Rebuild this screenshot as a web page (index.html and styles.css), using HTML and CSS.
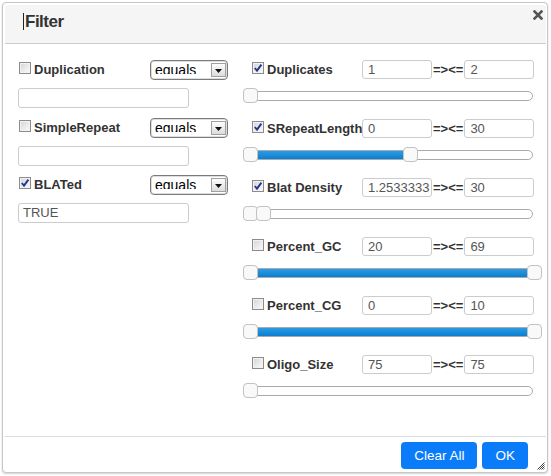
FILE: index.html
```html
<!DOCTYPE html>
<html>
<head>
<meta charset="utf-8">
<link rel="stylesheet" href="styles.css">
</head>
<body>
<div class="dialog">
  <div class="titlebar">
    <span class="caret"></span><span class="title">Filter</span>
    <span class="close"><svg width="10" height="10" viewBox="0 0 10 10"><path d="M1.5 1.5 L8.5 8.5 M8.5 1.5 L1.5 8.5" stroke="#555" stroke-width="2.6" stroke-linecap="square"/></svg></span>
  </div>
  <div class="content">
    <div class="col-left">
      <div class="lgroup">
        <div class="row">
          <span class="cb"></span><span class="lbl">Duplication</span>
          <span class="select"><span class="sel-text">equals</span><span class="sel-btn"><svg width="7" height="4" viewBox="0 0 7 4"><path d="M0 0 H7 L3.5 4 Z" fill="#111"/></svg></span></span>
        </div>
        <div class="textbox"></div>
      </div>
      <div class="lgroup">
        <div class="row">
          <span class="cb"></span><span class="lbl">SimpleRepeat</span>
          <span class="select"><span class="sel-text">equals</span><span class="sel-btn"><svg width="7" height="4" viewBox="0 0 7 4"><path d="M0 0 H7 L3.5 4 Z" fill="#111"/></svg></span></span>
        </div>
        <div class="textbox"></div>
      </div>
      <div class="lgroup">
        <div class="row">
          <span class="cb checked"><svg width="10" height="10" viewBox="0 0 10 10"><path d="M1.8 5 L4 7.6 L8.4 1.6" stroke="#23368f" stroke-width="1.9" fill="none"/></svg></span><span class="lbl">BLATed</span>
          <span class="select"><span class="sel-text">equals</span><span class="sel-btn"><svg width="7" height="4" viewBox="0 0 7 4"><path d="M0 0 H7 L3.5 4 Z" fill="#111"/></svg></span></span>
        </div>
        <div class="textbox">TRUE</div>
      </div>
    </div>
    <div class="col-right">
      <div class="rgroup">
        <div class="row">
          <span class="cb checked"><svg width="10" height="10" viewBox="0 0 10 10"><path d="M1.8 5 L4 7.6 L8.4 1.6" stroke="#23368f" stroke-width="1.9" fill="none"/></svg></span><span class="rlbl">Duplicates</span>
          <span class="num">1</span><span class="op">=&gt;&lt;=</span><span class="num">2</span>
        </div>
        <div class="slider"><span class="handle" style="left:-1px"></span></div>
      </div>
      <div class="rgroup">
        <div class="row">
          <span class="cb checked"><svg width="10" height="10" viewBox="0 0 10 10"><path d="M1.8 5 L4 7.6 L8.4 1.6" stroke="#23368f" stroke-width="1.9" fill="none"/></svg></span><span class="rlbl">SRepeatLength</span>
          <span class="num">0</span><span class="op">=&gt;&lt;=</span><span class="num">30</span>
        </div>
        <div class="slider"><span class="range" style="left:14px;width:145px"></span><span class="handle" style="left:-1px"></span><span class="handle" style="left:159px"></span></div>
      </div>
      <div class="rgroup">
        <div class="row">
          <span class="cb checked"><svg width="10" height="10" viewBox="0 0 10 10"><path d="M1.8 5 L4 7.6 L8.4 1.6" stroke="#23368f" stroke-width="1.9" fill="none"/></svg></span><span class="rlbl">Blat Density</span>
          <span class="num">1.2533333</span><span class="op">=&gt;&lt;=</span><span class="num">30</span>
        </div>
        <div class="slider"><span class="handle" style="left:-1px"></span><span class="handle" style="left:12px"></span></div>
      </div>
      <div class="rgroup">
        <div class="row">
          <span class="cb"></span><span class="rlbl">Percent_GC</span>
          <span class="num">20</span><span class="op">=&gt;&lt;=</span><span class="num">69</span>
        </div>
        <div class="slider"><span class="range" style="left:14px;width:269px"></span><span class="handle" style="left:-1px"></span><span class="handle" style="left:283px"></span></div>
      </div>
      <div class="rgroup">
        <div class="row">
          <span class="cb"></span><span class="rlbl">Percent_CG</span>
          <span class="num">0</span><span class="op">=&gt;&lt;=</span><span class="num">10</span>
        </div>
        <div class="slider"><span class="range" style="left:14px;width:269px"></span><span class="handle" style="left:-1px"></span><span class="handle" style="left:283px"></span></div>
      </div>
      <div class="rgroup">
        <div class="row">
          <span class="cb"></span><span class="rlbl">Oligo_Size</span>
          <span class="num">75</span><span class="op">=&gt;&lt;=</span><span class="num">75</span>
        </div>
        <div class="slider"><span class="handle" style="left:-1px"></span></div>
      </div>
    </div>
  </div>
  <div class="footer">
    <button class="btn">Clear All</button>
    <button class="btn">OK</button>
  </div>
  <span class="grip"><svg width="8" height="8" viewBox="0 0 8 8"><path d="M7.5 0.5 L0.5 7.5 M7.5 2.5 L2.5 7.5 M7.5 4.5 L4.5 7.5 M7.5 6.5 L6.5 7.5" stroke="#444" stroke-width="1"/></svg></span>
</div>
</body>
</html>
```
FILE: styles.css
```css
* { box-sizing: border-box; }
html, body { margin: 0; padding: 0; background: #fff; }
body {
  font-family: "Liberation Sans", Arial, sans-serif;
  width: 551px;
  height: 476px;
  overflow: hidden;
  color: #333;
}
.dialog {
  position: relative;
  margin: 2px 0 0 2px;
  width: 546px;
  height: 471px;
  border: 1px solid #c6c6c6;
  border-radius: 4px;
  padding: 2px 1px 2px 2px;
  display: flex;
  flex-direction: column;
  background: #fff;
  box-shadow: 0 1px 2px rgba(0,0,0,0.18);
}
.titlebar {
  height: 39px;
  flex: none;
  background: #f5f5f5;
  border-bottom: 1px solid #cccccc;
  border-radius: 3px 3px 0 0;
  display: flex;
  align-items: flex-start;
  padding-left: 18px;
}
.caret {
  width: 1px;
  height: 17px;
  background: #222;
  margin-top: 8px;
  margin-right: 1px;
}
.title {
  font-size: 17px;
  font-weight: bold;
  line-height: 20px;
  margin-top: 7px;
  letter-spacing: -0.5px;
  color: #333;
}
.close {
  margin-left: auto;
  margin-top: 5px;
  margin-right: 3px;
  width: 10px;
  height: 10px;
  display: flex;
}
.content {
  flex: none;
  height: 392px;
  display: flex;
  padding: 16px 0 0 13px;
}
.col-left {
  width: 210px;
  margin-right: 15px;
}
.col-right {
  width: 291px;
}
.row {
  display: flex;
  align-items: flex-start;
  height: 19px;
}
.lgroup { margin-bottom: 9.5px; }
.lgroup .cb { margin-left: 1px; }
.rgroup .cb { margin-left: 9px; }
.cb {
  flex: none;
  width: 12px;
  height: 12px;
  margin-top: 2px;
  margin-right: 3px;
  border: 1px solid #8c8c8c;
  background: linear-gradient(135deg, #d2d2d2 0%, #e9e9e9 50%, #fafafa 100%);
  box-shadow: inset 0 0 0 1px #f2f2f2;
  display: flex;
  align-items: center;
  justify-content: center;
}
.lbl, .rlbl {
  font-size: 13px;
  font-weight: bold;
  line-height: 19px;
  white-space: nowrap;
  color: #333;
}
.rlbl { width: 95px; flex: none; }
.select {
  margin-left: auto;
  width: 78px;
  height: 20px;
  border: 1px solid #7b7b7b;
  border-radius: 4px;
  box-shadow: inset 0 0 0 1px #dedede;
  background: #fff;
  display: flex;
  align-items: flex-start;
  padding: 0 1px 0 4px;
}
.sel-text {
  flex: 1;
  height: 12px;
  margin-top: 1px;
  overflow: hidden;
  font-size: 14px;
  line-height: 17px;
  color: #000;
}
.sel-btn {
  width: 15px;
  height: 14px;
  margin-top: 2px;
  border: 1px solid #a0a0a0;
  background: linear-gradient(#fdfdfd, #dcdcdc);
  display: flex;
  align-items: center;
  justify-content: center;
  padding-top: 2px;
}
.textbox {
  margin-top: 9px;
  width: 171px;
  height: 20px;
  border: 1px solid #cccccc;
  border-radius: 3px;
  font-size: 13px;
  line-height: 18px;
  padding-left: 4px;
  color: #555;
}
.num {
  flex: none;
  width: 70px;
  height: 19px;
  border: 1px solid #cccccc;
  border-radius: 3px;
  font-size: 13px;
  line-height: 17px;
  padding-left: 5px;
  color: #555;
  white-space: nowrap;
  overflow: hidden;
}
.op {
  flex: none;
  font-size: 13px;
  font-weight: bold;
  line-height: 19px;
  color: #333;
  margin: 0 1px;
}
.slider {
  position: relative;
  width: 290px;
  height: 10px;
  margin: 12px 0 18px 0;
  border: 1px solid #aaaaaa;
  border-radius: 5px;
  background: #fff;
}
.range {
  position: absolute;
  top: 0;
  bottom: 0;
  background: linear-gradient(#2d9be4, #0b80cf);
}
.handle {
  position: absolute;
  top: -4px;
  width: 15px;
  height: 15px;
  border: 1px solid #c2c2c2;
  border-radius: 4px;
  background: #f9f9f9;
}
.footer {
  flex: none;
  height: 34px;
  border-top: 1px solid #dddddd;
  display: flex;
  justify-content: flex-end;
  align-items: flex-start;
  padding: 5px 18px 0 0;
  gap: 5px;
}
.btn {
  height: 27px;
  border: none;
  border-radius: 4px;
  background: #0b7cf9;
  color: #fff;
  font-family: "Liberation Sans", Arial, sans-serif;
  font-size: 13.5px;
  padding: 0 13px;
  margin: 0;
}
.grip {
  position: absolute;
  right: 2px;
  bottom: 2px;
  width: 8px;
  height: 8px;
  display: flex;
}
```
